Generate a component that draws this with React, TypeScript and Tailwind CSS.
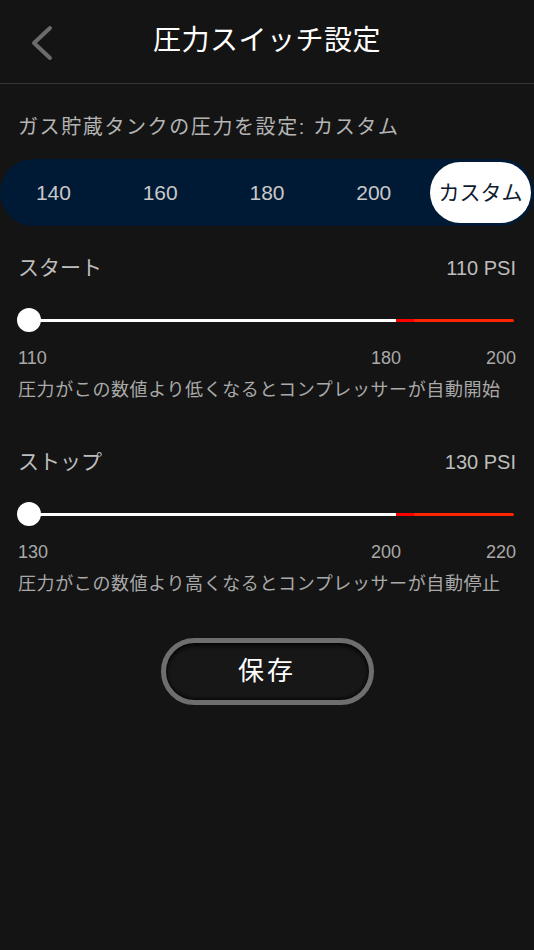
import React from 'react';

const font = `font-['Liberation_Sans','Noto_Sans_CJK_JP',sans-serif]`;

const presets = ['140', '160', '180', '200', 'カスタム'];

function Slider({ whiteWidth }: { whiteWidth: number }) {
  return (
    <div className="relative h-[24px] flex items-center">
      <div className="ml-[11px] mr-[2px] flex-1 flex h-[3px] rounded-full overflow-hidden">
        <div className="bg-white" style={{ width: whiteWidth }} />
        <div className="w-[18px] bg-[#ff0000]" />
        <div className="flex-1 bg-[#ff2400]" />
      </div>
      <div className="absolute left-[-1px] top-0 w-[24px] h-[24px] rounded-full bg-white" />
    </div>
  );
}

function PressureSection({
  title,
  value,
  min,
  mid,
  max,
  note,
}: {
  title: string;
  value: string;
  min: string;
  mid: string;
  max: string;
  note: string;
}) {
  return (
    <section>
      <div className="flex items-center justify-between h-[28px]">
        <span className="text-[21px] text-[#bdbdbd]">{title}</span>
        <span className="text-[20px] text-[#bdbdbd]">{value}</span>
      </div>
      <div className="mt-[26px]">
        <Slider whiteWidth={367} />
      </div>
      <div className="mt-[15px] flex items-center h-[22px] text-[18px] text-[#a9a9a9]">
        <span className="flex-1">{min}</span>
        <span className="w-[32px] text-center mr-[84px]">{mid}</span>
        <span>{max}</span>
      </div>
      <p className="mt-[10px] h-[22px] leading-[22px] text-[18px] tracking-[0.6px] text-[#a9a9a9] whitespace-nowrap">
        {note}
      </p>
    </section>
  );
}

export default function App() {
  return (
    <div className={`w-full h-[950px] bg-[#141414] ${font}`}>
      {/* Header */}
      <header className="h-[84px] border-b border-[#343434] grid grid-cols-[1fr_auto_1fr] items-center">
        <div className="pl-[29px] pt-[2px]">
          <svg width="26" height="36" viewBox="0 0 26 36" fill="none">
            <path d="M21 3 L5 18 L21 33" stroke="#6b6b6b" strokeWidth="4" strokeLinecap="round" strokeLinejoin="round" />
          </svg>
        </div>
        <h1 className="text-[28px] text-white tracking-[0.5px] pb-[2px]">圧力スイッチ設定</h1>
        <div />
      </header>

      <p className="mt-[29px] px-[18px] h-[28px] leading-[28px] text-[20px] tracking-[1.6px] text-[#b4b4b4] whitespace-nowrap">
        ガス貯蔵タンクの圧力を設定: カスタム
      </p>

      {/* Preset selector */}
      <div className="mt-[18px] h-[67px] rounded-full bg-[#001a35] grid grid-cols-5">
        {presets.map((p) => (
          <div key={p} className="p-[3px] flex">
            {p === 'カスタム' ? (
              <div className="flex-1 rounded-full bg-white flex items-center justify-center text-[21px] text-[#0d1b2e]">
                {p}
              </div>
            ) : (
              <div className="flex-1 flex items-center justify-center text-[21px] text-[#c9c9c9]">{p}</div>
            )}
          </div>
        ))}
      </div>

      <div className="px-[18px]">
        <div className="mt-[28px]">
          <PressureSection
            title="スタート"
            value="110 PSI"
            min="110"
            mid="180"
            max="200"
            note="圧力がこの数値より低くなるとコンプレッサーが自動開始"
          />
        </div>
        <div className="mt-[47px]">
          <PressureSection
            title="ストップ"
            value="130 PSI"
            min="130"
            mid="200"
            max="220"
            note="圧力がこの数値より高くなるとコンプレッサーが自動停止"
          />
        </div>

        <div className="mt-[43px] flex justify-center">
          <button className="w-[213px] h-[67px] rounded-full border-[5px] border-[#6e6e6e] bg-[#171717] shadow-[inset_0_3px_4px_rgba(0,0,0,0.8),inset_0_-2px_3px_rgba(0,0,0,0.6)] text-[26px] text-white tracking-[3px]">
            保存
          </button>
        </div>
      </div>
    </div>
  );
}
